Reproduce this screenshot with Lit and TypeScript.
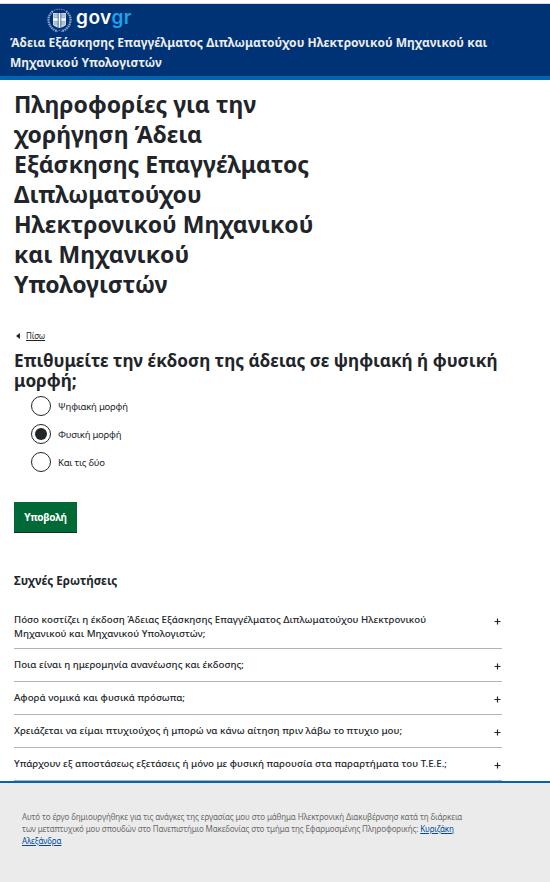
import { LitElement, html, css, svg } from "lit";
import { customElement, state } from "lit/decorators.js";
import { classMap } from "lit/directives/class-map.js";

const CHOICES = ["Ψηφιακή μορφή", "Φυσική μορφή", "Και τις δύο"];

const QUESTIONS: string[][] = [
  ["Πόσο κοστίζει η έκδοση Άδειας Εξάσκησης Επαγγέλματος Διπλωματούχου Ηλεκτρονικού", "Μηχανικού και Μηχανικού Υπολογιστών;"],
  ["Ποια είναι η ημερομηνία ανανέωσης και έκδοσης;"],
  ["Αφορά νομικά και φυσικά πρόσωπα;"],
  ["Χρειάζεται να είμαι πτυχιούχος ή μπορώ να κάνω αίτηση πριν λάβω το πτυχιο μου;"],
  ["Υπάρχουν εξ αποστάσεως εξετάσεις ή μόνο με φυσική παρουσία στα παραρτήματα του Τ.Ε.Ε.;"],
];

const TITLE = [
  "Πληροφορίες για την",
  "χορήγηση Άδεια",
  "Εξάσκησης Επαγγέλματος",
  "Διπλωματούχου",
  "Ηλεκτρονικού Μηχανικού",
  "και Μηχανικού",
  "Υπολογιστών",
];

const lines = (items: string[]) => items.map((t) => html`<span class="line">${t}</span>`);

@customElement("gov-header")
class GovHeader extends LitElement {
  static styles = css`
    :host {
      display: block;
      box-sizing: border-box;
      height: 77px;
      border-top: 1px solid #dcdcdc;
      border-bottom: 4px solid #0065b3;
      background: #003375;
      color: #ececec;
    }
    .logo { display: flex; height: 29px; padding-left: 47px; }
    .emblem { width: 25px; height: 25px; margin-top: 4px; }
    .word {
      margin: 0 0 0 4px;
      font: 600 19px/28px "Inter", sans-serif;
      letter-spacing: 0.5px;
      color: #fff;
    }
    .gr { color: #1ba4ec; }
    .service {
      padding-left: 10px;
      font-weight: 700;
      font-size: 12px;
      line-height: 20px;
      letter-spacing: 0.02px;
    }
    .line { display: block; white-space: nowrap; }
  `;
  render() {
    return html`
      <div class="logo">
        <svg class="emblem" viewBox="0 0 25 25" fill="none">
          <path d="M6 3.2Q.6 7.5 1.6 13.5Q2.8 20.4 9.8 23M19 3.2Q24.4 7.5 23.4 13.5Q22.2 20.4 15.2 23" stroke="#8da5c6" stroke-width="2.2" stroke-dasharray="1.6 .7"></path>
          <path d="M7 2.4Q12.5 0 18 2.4M9.5 23.7L12.5 22.3L15.5 23.7" stroke="#8199bd" stroke-width=".9" stroke-dasharray="1.6 .8"></path>
          <path d="M6 5H19V16.5Q18.5 18.6 12.5 19.8Q6.5 18.6 6 16.5Z" fill="#c9d6e7"></path>
          ${[7, 9.2, 13.9, 16].map((y) => svg`<path d=${`M7 ${y}H11M14 ${y}H18`} stroke="#6f8cb6" stroke-width=".6"></path>`)}
          <path d="M12.5 5V19.5M6 11.5H19" stroke="#fff" stroke-width="1.8"></path>
          <path d="M11.2 5V19.3M13.8 5V19.3" stroke="#2b5590" stroke-width=".8"></path>
        </svg>
        <div class="word">gov<span class="gr">gr</span></div>
      </div>
      <div class="service">
        ${lines(["Άδεια Εξάσκησης Επαγγέλματος Διπλωματούχου Ηλεκτρονικού Μηχανικού και", "Μηχανικού Υπολογιστών"])}
      </div>
    `;
  }
}

@customElement("gov-footer")
class GovFooter extends LitElement {
  static styles = css`
    :host {
      display: block;
      flex: 1;
      border-top: 2px solid #0065b3;
      background: #ebebeb;
      padding: 28px 22px 0;
      font-size: 8px;
      line-height: 12px;
      letter-spacing: -0.1px;
      color: #6b6b6b;
    }
    .line { display: block; white-space: nowrap; }
    .tight { letter-spacing: -0.13px; }
    a { color: #004b9b; text-decoration: underline; text-underline-offset: 1px; }
  `;
  render() {
    return html`
      <span class="line">Αυτό το έργο δημιουργήθηκε για τις ανάγκες της εργασίας μου στο μάθημα Ηλεκτρονική Διακυβέρνσησ κατά τη διάρκεια</span>
      <span class="line tight">των μεταπτυχικό μου σπουδών στο Πανεπιστήμιο Μακεδονίας στο τμήμα της Εφαρμοσμένης Πληροφορικής: <a>Κυριζάκη</a></span>
      <span class="line"><a>Αλεξάνδρα</a></span>
    `;
  }
}

@customElement("app-root")
class AppRoot extends LitElement {
  @state() private selected = 1;

  static styles = css`
    :host {
      display: flex;
      flex-direction: column;
      box-sizing: border-box;
      height: 882px;
      padding-top: 3px;
      overflow: hidden;
      background: #fff;
      color: #212529;
      font-family: "Noto Sans", sans-serif;
    }
    main { box-sizing: border-box; height: 701px; flex: none; padding: 9px 48px 0 14px; }
    .line { display: block; white-space: nowrap; }
    h1, h2, h3 { margin: 0; font-weight: 700; }
    h1 { font-size: 23px; line-height: 30px; }
    .back {
      display: flex;
      align-items: center;
      gap: 6px;
      height: 14px;
      margin-top: 30px;
      padding-left: 2px;
      font-size: 8px;
      line-height: 14px;
      letter-spacing: -0.1px;
    }
    .back svg { width: 4px; height: 6px; }
    .back a { text-decoration: underline; text-underline-offset: 1px; }
    h2 { margin-top: 8px; font-size: 17.2px; line-height: 20px; }
    .choices { display: grid; gap: 8px; margin: 5px 0 0 17px; }
    .choice {
      display: flex;
      align-items: center;
      gap: 7px;
      height: 20px;
      font-size: 9.5px;
      letter-spacing: -0.22px;
    }
    .ring {
      display: grid;
      place-items: center;
      box-sizing: border-box;
      width: 20px;
      height: 20px;
      border: 1.4px solid #212529;
      border-radius: 50%;
    }
    .on::after { content: ""; width: 12px; height: 12px; border-radius: 50%; background: #212529; }
    button {
      display: block;
      width: 63px;
      height: 31px;
      margin-top: 30px;
      padding: 0;
      border: 0;
      border-bottom: 1px solid #1a2a2a;
      background: #006a37;
      color: #fff;
      font: 700 10px/30px "Noto Sans", sans-serif;
      letter-spacing: -0.25px;
    }
    h3 { margin-top: 38px; font-size: 11.6px; line-height: 20px; }
    .faq { margin-top: 12px; }
    .row {
      display: flex;
      justify-content: space-between;
      box-sizing: border-box;
      padding: 9px 0;
      border-bottom: 1px solid #b1b4b6;
      font-size: 9.7px;
      font-weight: 500;
      line-height: 14px;
      letter-spacing: 0.025px;
    }
    .row:first-child { padding: 10px 0 7px; }
    .plus { width: 7px; height: 7px; margin: 5px 1px 0 0; }
  `;

  render() {
    return html`
      <gov-header></gov-header>
      <main>
        <h1>${lines(TITLE)}</h1>
        <div class="back">
          <svg viewBox="0 0 4 6"><path d="M4 0V6L0 3Z" fill="#212529"></path></svg>
          <a>Πίσω</a>
        </div>
        <h2>${lines(["Επιθυμείτε την έκδοση της άδειας σε ψηφιακή ή φυσική", "μορφή;"])}</h2>
        <div class="choices">
          ${CHOICES.map(
            (c, i) => html`<div class="choice" @click=${() => (this.selected = i)}>
              <span class=${classMap({ ring: true, on: i === this.selected })}></span><span>${c}</span>
            </div>`
          )}
        </div>
        <button>Υποβολή</button>
        <h3>Συχνές Ερωτήσεις</h3>
        <div class="faq">
          ${QUESTIONS.map(
            (q) => html`<div class="row">
              <div>${lines(q)}</div>
              <svg class="plus" viewBox="0 0 7 7"><path d="M3.5 .5V6.5M.5 3.5H6.5" stroke="#212529" stroke-width="1.2"></path></svg>
            </div>`
          )}
        </div>
      </main>
      <gov-footer></gov-footer>
    `;
  }
}
